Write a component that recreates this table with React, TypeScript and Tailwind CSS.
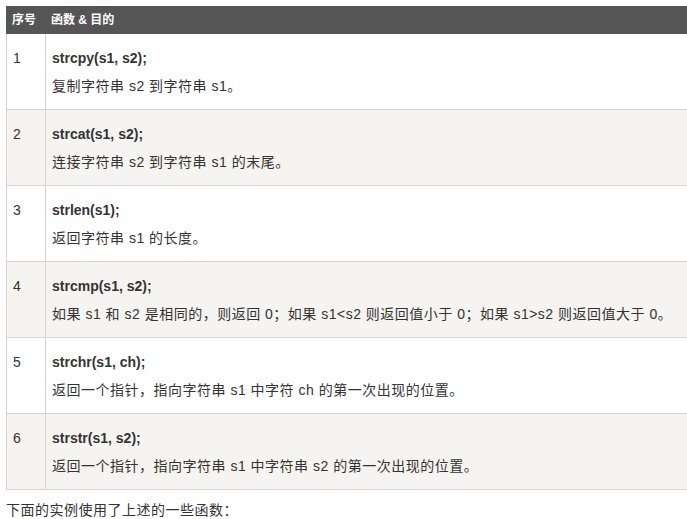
import React from 'react';

interface FuncRow {
  id: number;
  name: string;
  desc: string;
}

const rows: FuncRow[] = [
  { id: 1, name: 'strcpy(s1, s2);', desc: '复制字符串 s2 到字符串 s1。' },
  { id: 2, name: 'strcat(s1, s2);', desc: '连接字符串 s2 到字符串 s1 的末尾。' },
  { id: 3, name: 'strlen(s1);', desc: '返回字符串 s1 的长度。' },
  {
    id: 4,
    name: 'strcmp(s1, s2);',
    desc: '如果 s1 和 s2 是相同的，则返回 0；如果 s1<s2 则返回值小于 0；如果 s1>s2 则返回值大于 0。',
  },
  { id: 5, name: 'strchr(s1, ch);', desc: '返回一个指针，指向字符串 s1 中字符 ch 的第一次出现的位置。' },
  { id: 6, name: 'strstr(s1, s2);', desc: '返回一个指针，指向字符串 s1 中字符串 s2 的第一次出现的位置。' },
];

export default function App() {
  return (
    <div
      className="min-h-screen bg-white pl-[6px] pt-[6px] text-[14px] text-[#333] overflow-hidden"
      style={{ fontFamily: '"Liberation Sans", "Noto Sans CJK SC", sans-serif' }}
    >
      <div className="overflow-hidden">
        <table className="table-fixed border-collapse w-[682px]">
          <colgroup>
            <col className="w-[39px]" />
            <col />
          </colgroup>
          <thead>
            <tr>
              <th className="h-[27px] bg-[#555] border border-[#555] text-white text-[12px] font-bold text-left pl-[5px] leading-[20px]">
                序号
              </th>
              <th className="h-[27px] bg-[#555] border border-[#555] text-white text-[12px] font-bold text-left pl-[5px] leading-[20px]">
                函数 &amp; 目的
              </th>
            </tr>
          </thead>
          <tbody>
            {rows.map(row => (
              <tr key={row.id} className={row.id % 2 === 0 ? 'bg-[#f6f4f0]' : 'bg-white'}>
                <td className="border border-[#d4d4d4] align-top pl-[6px] pt-[10px] pb-[9px] leading-[28px]">
                  {row.id}
                </td>
                <td className="border border-[#d4d4d4] align-top pl-[6px] pt-[10px] pb-[9px] leading-[28px] whitespace-nowrap">
                  <div className="font-bold">{row.name}</div>
                  <div className="tracking-[0.5px]">{row.desc}</div>
                </td>
              </tr>
            ))}
          </tbody>
        </table>
      </div>

      {/* text under the table */}
      <p className="mt-[6px] leading-[28px] tracking-[0.5px]">下面的实例使用了上述的一些函数：</p>
    </div>
  );
}
